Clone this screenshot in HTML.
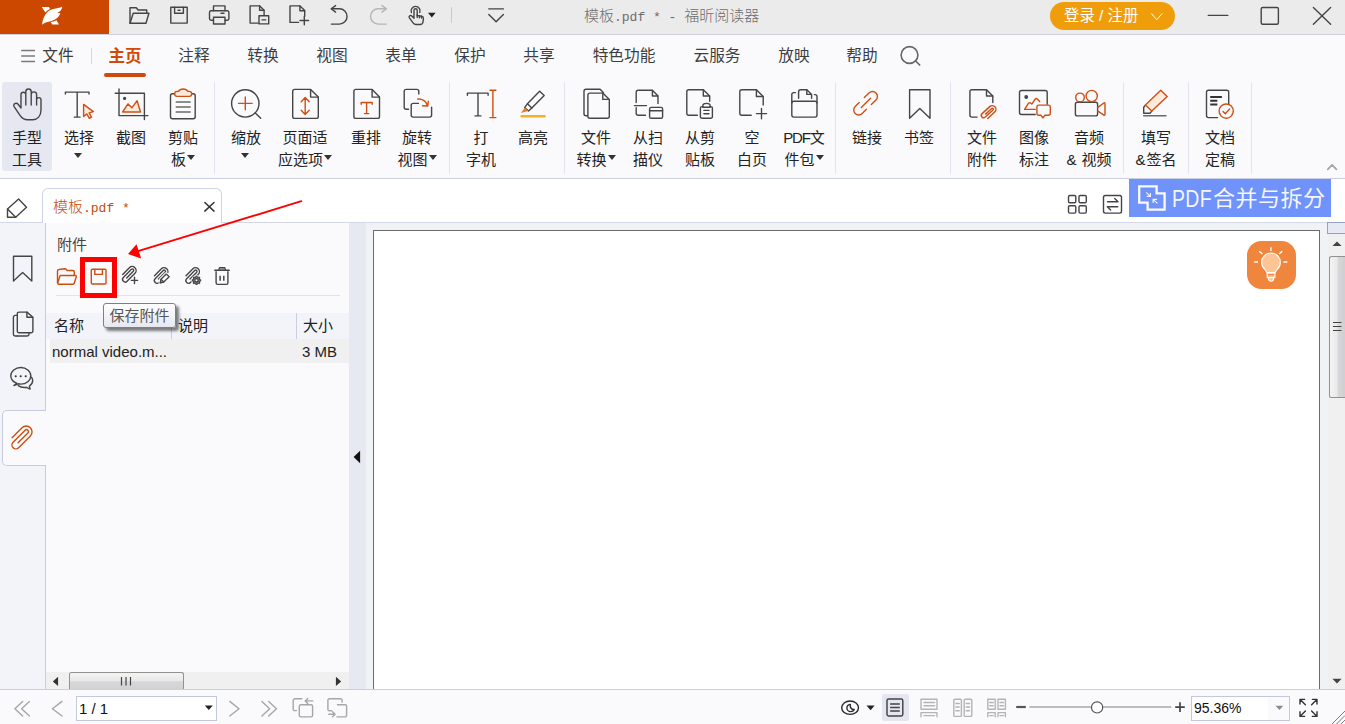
<!DOCTYPE html>
<html lang="zh-CN">
<head>
<meta charset="utf-8">
<title>模板.pdf * - 福昕阅读器</title>
<style>
*{box-sizing:border-box;margin:0;padding:0}
html,body{width:1345px;height:724px;overflow:hidden;background:#fafafc}
body{position:relative;font-family:"Liberation Sans","Noto Sans CJK SC",sans-serif;font-size:15px;color:#222;-webkit-font-smoothing:antialiased}
.a{position:absolute}
svg{position:absolute;overflow:visible}
.ic{fill:none;stroke:#444;stroke-width:1.4;stroke-linecap:round;stroke-linejoin:round}
.or{stroke:#cf4f12}
.gy{stroke:#b4b4b4}
/* title bar */
#tb{left:0;top:0;width:1345px;height:34px;background:#ebebeb}
#logo{left:0;top:0;width:109px;height:34px;background:#cc4700}
#tbline{left:0;top:34px;width:1345px;height:1px;background:#cdd0da}
#title{left:584px;top:6.700px;height:22px;line-height:22px;font-size:15px;font-weight:300;color:#6c6c6c;white-space:nowrap;font-family:"Liberation Mono","Noto Sans CJK SC",monospace}
#title .l{font-size:13px}
#login{left:1050px;top:2px;width:125px;height:28px;border-radius:14px;background:#f09d0c;color:#fff;font-size:15px;line-height:28px;padding-left:14px;font-size:15.400px;white-space:nowrap}
/* menu bar */
#mb{left:0;top:35px;width:1345px;height:42px;background:#fafafc}
.mi{position:absolute;top:45px;height:22px;line-height:22px;font-size:15.7px;color:#3e3e3e;white-space:nowrap;transform:translateX(-50%)}
/* ribbon */
#rib{left:0;top:77px;width:1345px;height:101px;background:#fafafc}
#ribline{left:0;top:178px;width:1345px;height:1px;background:#c9cfe3}
.sep{position:absolute;top:82px;width:1px;height:92px;background:#e3e5ee}
.rb{position:absolute;top:127px;width:90px;margin-left:-45px;text-align:center;font-size:15px;line-height:22px;color:#222;white-space:nowrap}
.rb i{display:inline-block;width:0;height:0;border-left:4px solid transparent;border-right:4px solid transparent;border-top:5px solid #333;vertical-align:middle;margin-left:1px;position:relative;top:-4px}
.rb i.s{top:-6px;left:-1.500px;margin-left:0}
/* tab row */
#tabrow{left:0;top:179px;width:1345px;height:43px;background:#fff}
#tabline{left:0;top:222px;width:1345px;height:1px;background:#d3d7e6}
#tab{left:42px;top:188px;width:180px;height:35px;background:#fff;border:1px solid #cfd4e6;border-bottom:none;border-radius:6px 6px 0 0}
#tabtxt{left:53px;top:198px;height:22px;line-height:22px;font-size:15px;font-weight:300;color:#c44a08;white-space:nowrap;font-family:"Liberation Mono","Noto Sans CJK SC",monospace}
#tabtxt .l{font-size:13px}
#banner{left:1129px;top:179px;width:202px;height:38px;background:#6f93fb;color:#fff;font-size:22px;line-height:38px;white-space:nowrap}
#banner span{position:absolute;left:42.500px;top:1px;letter-spacing:.500px;opacity:.93}
/* left strip */
#strip{left:0;top:223px;width:46px;height:466px;background:#f3f4f9;border-right:1px solid #c8cdde}
#stripact{left:2px;top:410px;width:44px;height:56px;background:#fafafc;border:1px solid #c8cdde;border-right:none;border-radius:5px 0 0 5px}
/* panel */
#panel{left:46px;top:223px;width:303px;height:466px;background:#fafafc}
#ptitle{left:57px;top:234px;line-height:22px;font-size:15px;color:#444}
#pline{left:56px;top:295px;width:284px;height:1px;background:#dfe3ee}
#thead{left:46px;top:313px;width:303px;height:26px;background:#f3f4f9}
.th{position:absolute;top:314px;line-height:24px;font-size:15px;color:#222}
.cs{position:absolute;top:313px;width:1px;height:26px;background:#c9cfe0}
#trow{left:50px;top:339px;width:299px;height:24px;background:#f0f0f0}
.td{position:absolute;top:340px;line-height:23px;font-size:15px;color:#222;white-space:nowrap}
#tip{left:103px;top:303px;width:73px;height:25px;background:linear-gradient(#fff,#e6e7f1);border:1px solid #7f7f7f;border-radius:3px;box-shadow:3px 3px 3px rgba(0,0,0,.5);font-size:15px;line-height:22px;padding-top:1px;color:#575757;text-align:center;white-space:nowrap}
#redbox{left:79.600px;top:256.500px;width:37.600px;height:41px;border:5.800px solid #ff0000}
/* hscroll */
#hs{left:46px;top:672px;width:303px;height:17px;background:#f0f0f0}
#hsth{left:68.500px;top:672px;width:115px;height:18px;background:linear-gradient(#f3f3f3 0%,#e9e9e9 45%,#d7d7d9 52%,#d2d2d4 100%);border:1px solid #929292;border-bottom:none;border-radius:2.500px 2.500px 0 0}
/* collapse strip */
#coll{left:349px;top:223px;width:17px;height:466px;background:#e6e8f2}
/* doc area */
#doc{left:366px;top:223px;width:962px;height:466px;background:#f1f2f6}
#page{left:373px;top:230px;width:947px;height:470px;background:#fff;border:1px solid #6c6c6c;border-bottom:none}
#bulb{left:1247px;top:241px;width:49px;height:48px;border-radius:14.500px;background:#f0863d}
/* vscroll */
#vs{left:1328px;top:223px;width:17px;height:466px;background:#f0f0f0}
#vstop{left:1327px;top:222px;width:19px;height:12px;background:#e6e9f3;border:1px solid #96a1bd}
#vsth{left:1328.500px;top:256px;width:18px;height:142px;background:linear-gradient(90deg,#f3f3f3 0%,#e9e9e9 42%,#d7d7d9 50%,#cdcdd0 100%);border:1px solid #929292;border-right:none;border-radius:2.500px 0 0 2.500px}
/* status bar */
#sbline{left:0;top:689px;width:1345px;height:1px;background:#c9cfe3}
#sb{left:0;top:690px;width:1345px;height:34px;background:#fafafc}
#pgin{left:76px;top:696px;width:141px;height:25px;background:#fff;border:1px solid #c3c8dc;font-size:15px;line-height:23px;padding-left:2px;color:#111}
#zmin{left:1191px;top:696px;width:99px;height:25px;background:#fff;border:1px solid #c3c8dc;font-size:14px;line-height:23px;padding-left:2px;color:#111}
#zmbtn{left:1268px;top:697px;width:21px;height:23px;background:#fafafc}
#viewact{left:882px;top:694px;width:27px;height:27px;background:#e4e6f0;border-radius:2px}
.tri{position:absolute;width:0;height:0;border-left:4px solid transparent;border-right:4px solid transparent;border-top:5px solid #222}
</style>
</head>
<body>
<!-- TITLE BAR -->
<div class="a" id="tb"></div>
<div class="a" id="logo"></div>
<div class="a" id="tbline"></div>
<div class="a" style="left:109px;top:0;width:1px;height:34px;background:#f3f6f8"></div>
<div class="a" id="title">模板<span class="l">.pdf * - </span>福昕阅读器</div>
<div class="a" id="login">登录 / 注册</div>

<svg class="a" style="left:0;top:0" width="1345" height="34" viewBox="0 0 1345 34">
 <!-- foxit logo -->
 <g fill="#fff">
  <path d="M41.800 7h7.200l1 2c-1.900.9-3.400 2.100-4.700 3.600z"/>
  <path d="M42 24.800c.2-2.600.8-5.100 1.900-7.500 .9-2.100 2.200-4 3.900-5.600 1.600-1.400 3.500-2.300 5.600-2.800 3.100-.6 6.100-.9 8.900-2.100-.3 1.400-.800 2.600-1.500 3.700-.9 .9-2.100 1.500-3.500 1.900 1 .5 2.100.8 3.100.8-.6 1.600-1.500 3-2.700 4.300-1.700 1.600-3.800 2.700-6.200 3.500-1.900.6-3.900 1-5.800 1.500-1.400.6-2.600 1.400-3.700 2.300z"/>
  <path d="M50.700 22.100c2-.4 4-1 5.800-1.900l2.500 4.200-6.700.2z"/>
 </g>
 <g class="ic" stroke-width="1.35">
  <!-- open folder -->
  <path d="M130 23.300V7.800h6.300l1.800 2.200h8.600v3.200"/><path d="M130 23.300l3.200-10.100h15.700l-2.900 10.100z"/>
  <!-- save -->
  <path d="M170.800 7.200h16.400v15.900h-16.400z"/><path d="M174.600 7.200v6h8.800v-6"/><path d="M178 10.300h2"/>
  <!-- print -->
  <path d="M213.500 10.800V5.900h11.500v4.900"/><path d="M213.500 20.300h-2.300a1.700 1.700 0 0 1-1.700-1.700v-6.100a1.700 1.700 0 0 1 1.700-1.700h16a1.700 1.700 0 0 1 1.700 1.700v6.100a1.700 1.700 0 0 1-1.700 1.700h-2.200"/><path d="M213.500 17.300h11.500v6.700h-11.500z"/><path d="M221 13.300h3"/>
  <!-- doc minus -->
  <path d="M258.500 23.100h-8.400V5.900h9.700l4.300 4.300v5.100"/><path d="M259.600 6v4.300h4.300"/><path d="M259 15.800h9.700v8.100H259z"/><path d="M262 19.900h3.700"/>
  <!-- doc plus -->
  <path d="M298.500 22.400h-8.500V5.900h10l4.700 4.700v5.600"/><path d="M299.900 6v4.700h4.700"/><path d="M304.300 16.300v8.500M300 20.500h8.600"/>
  <!-- undo -->
  <path d="M335.600 5.600l-4.400 3.200 4.400 3.300"/><path d="M331.600 8.800h7.800a7.600 7.600 0 0 1 0 15.300h-8"/>
  <!-- hand pointer -->
  <path d="M414 17.500v-7.200a1.600 1.600 0 0 1 3.200 0v5.100l4.400.9c1.200.3 1.900 1.200 1.800 2.400l-.4 3.300c-.2 1.500-1.400 2.500-2.900 2.500h-4.100c-1.100 0-2.100-.5-2.700-1.400l-3.900-5.200c-.5-.8-.4-1.600.3-2.100.700-.5 1.500-.4 2.100.200l2.200 2.300"/>
  <path d="M411.400 12.500a4.500 4.500 0 1 1 8.400 0"/>
  <path d="M417.200 15v2.500M419.400 15.600v2.200M421.500 16.100v2"/>
  <!-- dropdown -->
  <path d="M488.800 8.900h14.600M488.800 14.400l7.300 7.400 7.300-7.400"/>
  <!-- window controls -->
  <path d="M1208.300 15.400h19.500"/>
  <rect x="1261.200" y="7.500" width="17.200" height="16.700" rx="1.500"/>
  <path d="M1313.400 7.400l17.200 16.900M1330.600 7.400l-17.200 16.900"/>
 </g>
 <!-- redo (disabled) -->
 <g class="ic gy" stroke-width="1.35"><path d="M382 5.600l4.400 3.200-4.400 3.300"/><path d="M386 8.800h-7.800a7.600 7.600 0 0 0 0 15.300h8"/></g>
 <path fill="#222" d="M428 12.800h7.600l-3.800 4.700z"/>
 <path stroke="#c9c9c9" stroke-width="1" d="M451.500 7.100v15.700"/>
 <!-- login chevron -->
 <path fill="none" stroke="#fff" stroke-width="1" stroke-linecap="round" stroke-linejoin="round" d="M1151.600 13.700l5.200 6 5.200-6"/>
</svg>


<!-- MENU BAR -->
<div class="a" id="mb"></div>
<div class="mi" style="left:58px">文件</div>
<div class="a" style="left:91px;top:48px;width:1px;height:16px;background:#d5d8e2"></div>
<div class="mi" style="left:125px;color:#d04a0a;font-weight:bold;font-size:16.5px">主页</div>
<div class="a" style="left:104px;top:73px;width:42px;height:4px;border-radius:2px;background:#d04a0a"></div>
<div class="mi" style="left:194px">注释</div>
<div class="mi" style="left:263px">转换</div>
<div class="mi" style="left:332px">视图</div>
<div class="mi" style="left:401px">表单</div>
<div class="mi" style="left:470px">保护</div>
<div class="mi" style="left:539px">共享</div>
<div class="mi" style="left:624px">特色功能</div>
<div class="mi" style="left:717px">云服务</div>
<div class="mi" style="left:794px">放映</div>
<div class="mi" style="left:862px">帮助</div>

<svg class="a" style="left:0;top:35px" width="1345" height="42" viewBox="0 35 1345 42">
 <path stroke="#7a7a7a" stroke-width="1.5" fill="none" d="M21.200 50.500h13.800M21.200 56.100h13.800M21.200 61.600h13.800"/>
 <circle cx="909.500" cy="55" r="8.400" fill="none" stroke="#666" stroke-width="1.600"/>
 <path stroke="#666" stroke-width="1.700" stroke-linecap="round" d="M915.600 61l4.100 4"/>
</svg>


<!-- RIBBON -->
<div class="a" id="rib"></div>
<div class="a" id="ribline"></div>
<div class="a" style="left:2px;top:82px;width:50px;height:89px;background:#e6e8f1;border-radius:3px"></div>
<div class="sep" style="left:214px"></div>
<div class="sep" style="left:449px"></div>
<div class="sep" style="left:564px"></div>
<div class="sep" style="left:835px"></div>
<div class="sep" style="left:950px"></div>
<div class="sep" style="left:1123px"></div>
<div class="sep" style="left:1188px"></div>
<div class="sep" style="left:1251px"></div>
<div class="rb" style="left:27px">手型<br>工具</div>
<div class="rb" style="left:79px">选择<br><i class="s"></i></div>
<div class="rb" style="left:131px">截图</div>
<div class="rb" style="left:183px">剪贴<br>板<i></i></div>
<div class="rb" style="left:246px">缩放<br><i class="s"></i></div>
<div class="rb" style="left:305px">页面适<br>应选项<i></i></div>
<div class="rb" style="left:366px">重排</div>
<div class="rb" style="left:417px">旋转<br>视图<i></i></div>
<div class="rb" style="left:481px">打<br>字机</div>
<div class="rb" style="left:533px">高亮</div>
<div class="rb" style="left:596px">文件<br>转换<i></i></div>
<div class="rb" style="left:648px">从扫<br>描仪</div>
<div class="rb" style="left:700px">从剪<br>贴板</div>
<div class="rb" style="left:752px">空<br>白页</div>
<div class="rb" style="left:804px"><span style="letter-spacing:-1.200px">PDF</span>文<br>件包<i></i></div>
<div class="rb" style="left:867px">链接</div>
<div class="rb" style="left:919px">书签</div>
<div class="rb" style="left:982px">文件<br>附件</div>
<div class="rb" style="left:1034px">图像<br>标注</div>
<div class="rb" style="left:1089px">音频<br><span style="letter-spacing:1px">&amp;</span> 视频</div>
<div class="rb" style="left:1156px">填写<br><span style="letter-spacing:1px">&amp;</span>签名</div>
<div class="rb" style="left:1220px">文档<br>定稿</div>

<svg class="a" style="left:0;top:78px" width="1345" height="100" viewBox="0 78 1345 100">
<g class="ic" style="stroke:#454545" stroke-width="1.4">
 <!-- 1 hand -->
 <path d="M21 108V94.600a2.400 2.400 0 0 1 4.800 0V105M25.800 105V91.700a2.700 2.700 0 0 1 5.400 0V105M31.200 105V94.600a2.700 2.700 0 0 1 5.400 0V105M36.600 105v-5.200a2.200 2.200 0 0 1 4.400 0V110c0 6-3.500 9.800-8.300 9.800h-5.200c-3.400 0-5.700-1.700-7.500-4.400l-5.700-8.500c-.8-1.200-.6-2.500.5-3.200 1.100-.7 2.400-.4 3.300.6L21 108"/>
 <!-- 2 select: T -->
 <path d="M65.400 94v-1.900h23.600V94M77.200 92.100v25M74.200 117.100h5.900"/>
 <!-- 3 snapshot -->
 <path d="M119 89v26.600h29M115.200 93.200h29.200v26.300"/>
 <circle cx="124.600" cy="98.400" r=".9" fill="#454545"/>
 <!-- 4 clipboard -->
 <path d="M175 93.700h-2.500a2 2 0 0 0-2 2v21a2 2 0 0 0 2 2h20.700a2 2 0 0 0 2-2v-21a2 2 0 0 0-2-2H191"/>
 <path stroke="#6a6a6a" d="M176.200 102h14M176.200 107h14M176.200 112h14"/>
 <!-- 5 zoom -->
 <circle cx="245.300" cy="103.400" r="13.700"/><path d="M255.300 113l5.400 5.300"/>
 <!-- 6 fit page -->
 <path d="M310.600 89.400h-15.900a2 2 0 0 0-2 2v25a2 2 0 0 0 2 2h21.600a2 2 0 0 0 2-2V97.100z"/><path d="M310.600 89.600v7.500h7.600"/>
 <!-- 7 reflow -->
 <path d="M372.100 89.400h-16.200a2 2 0 0 0-2 2v25a2 2 0 0 0 2 2h21.600a2 2 0 0 0 2-2V97.100z"/><path d="M372.100 89.600v7.500h7.300"/>
 <!-- 8 rotate view -->
 <path d="M408.500 109.300h-2.300a2 2 0 0 1-2-2V91.400a2 2 0 0 1 2-2h10.600a2 2 0 0 1 2 2v2.600"/>
 <path d="M418.400 103.400h-5.200a2 2 0 0 0-2 2v9.700a2 2 0 0 0 2 2h16.400a2 2 0 0 0 2-2v-7.800"/>
 <!-- 9 typewriter T -->
 <path d="M467.400 95.200v-2.100h20.700v2.100M478 93.100v22.800M475 115.900h5.900"/>
 <!-- 10 highlighter -->
 <path d="M539.600 91.300l4.600 4.300-12.400 12.500-4.400-4.300z"/><path d="M527.400 103.800l-2.800 3.800 3.900 3.500 3.300-3"/>
 <!-- 11 file convert -->
 <path d="M587.400 115.800h-1.400a2 2 0 0 1-2-2V91.300a2 2 0 0 1 2-2h14.100l3.200 3.300"/>
 <path d="M602.800 93.100h-12.900a2 2 0 0 0-2 2v21.200a2 2 0 0 0 2 2h17.400a2 2 0 0 0 2-2V99.400z"/><path d="M602.800 93.300v6.100h6.300"/>
</g>
<g class="ic or" stroke-width="1.4">
 <!-- 2 cursor -->
 <path fill="#fdeadb" d="M83.600 104.400v12.100l3.200-2.600 2.500 4.500 2.200-1.300-2.400-4.300 4.300-1.200z"/>
 <!-- 3 mountain -->
 <path fill="#fdeadb" d="M122.600 112l5.400-8.100 3.900 3.900 5.200-7.100 3.400 11.300z"/>
 <!-- 4 clip -->
 <path fill="#fdeadb" d="M177 96.400a2.300 2.300 0 0 1-2.300-2.300v-.400a2.300 2.300 0 0 1 2.300-2.300h1.500c.800-1.500 2.500-2.400 4.700-2.400s3.900.9 4.700 2.400h1.500a2.300 2.300 0 0 1 2.300 2.300v.400a2.300 2.300 0 0 1-2.300 2.300z"/>
 <!-- 5 plus -->
 <path d="M238.500 103.400h13.600M245.300 97v12.800"/>
 <!-- 6 arrows -->
 <path d="M305.200 97.600v16.800M301.200 101.700l4-4.200 4 4.200M301.200 110.300l4 4.200 4-4.200"/>
 <!-- 7 T -->
 <path d="M361.200 104.300v-1.800h11v1.800M366.600 102.500v11.100M364.500 113.600h4.300"/>
 <!-- 8 arrow -->
 <path d="M417.600 99.100c4.800-.3 8.200 1.900 9.800 6.300M422.600 105.700l5.200.3.500-4.900"/>
 <!-- 9 cursor -->
 <path d="M489.900 90.200h6M489.900 117.600h6M492.900 90.200v27.400"/>
</g>
<path fill="#e8821e" d="M524.800 107.800l3.500 3.200-7.400 2z"/>
<path stroke="#f5b120" stroke-width="2.600" stroke-linecap="round" d="M521.700 116.200h22.800"/>

<g class="ic" style="stroke:#454545" stroke-width="1.4">
 <!-- 12 from scanner -->
 <path d="M636.200 102.600V92.200a2 2 0 0 1 2-2h14.200l5.600 5.800v7.400"/><path d="M652.400 90.400v5.600h5.400"/>
 <path d="M634.400 105.600h12"/>
 <path d="M636.200 107.800v5.500a2 2 0 0 0 2 2h7.300"/>
 <rect x="649.600" y="107.400" width="13" height="10.900" rx="1.600"/><path d="M649.600 110.800h13"/>
 <!-- 13 from clipboard -->
 <path d="M697.400 115.300h-8.600a2 2 0 0 1-2-2V91.700a2 2 0 0 1 2-2h14.500l6.400 6.300v5.200"/><path d="M703.300 89.900v6.100h6.200"/>
 <path d="M702.800 106.600h-.8a1.600 1.600 0 0 0-1.600 1.600v8.500a1.600 1.600 0 0 0 1.600 1.600h8.800a1.600 1.600 0 0 0 1.600-1.600v-8.500a1.600 1.600 0 0 0-1.600-1.600h-.8"/>
 <path d="M702.800 107.200v-1.300c0-1.500 1.600-2.500 3.700-2.500s3.700 1 3.700 2.500v1.300z"/>
 <path d="M703.900 110.400h5.100M703.900 113.700h5.100"/>
 <!-- 14 blank page -->
 <path d="M751.200 115.300h-9.400a2 2 0 0 1-2-2V91.700a2 2 0 0 1 2-2h14.600l6.800 6.800v8.600"/><path d="M756.400 89.900v6.600h6.600"/>
 <path d="M761.500 108.500v10.300M756.400 113.600h10.200"/>
 <!-- 15 portfolio -->
 <path d="M793.800 101.200h21.200a2 2 0 0 1 2 2v11.900a2 2 0 0 1-2 2h-21.200a2 2 0 0 1-2-2v-11.900a2 2 0 0 1 2-2z"/>
 <path d="M791.800 103V94.600a2 2 0 0 1 2-2h1.700M817 103v-6.400a2 2 0 0 0-2-2h-.6"/>
 <path d="M798.600 98.200v-6.500a2 2 0 0 1 2-2h6.200l4.800 4.700v3.800"/><path d="M806.800 89.900v4.500h4.600"/>
 <!-- 17 bookmark -->
 <path d="M909.600 89.700h20.400v28.500l-10.200-9.700-10.200 9.700z"/>
 <!-- 18 file attachment -->
 <path d="M977.100 117.100h-5.200a2 2 0 0 1-2-2V91.700a2 2 0 0 1 2-2h14.600l6.300 6.300v6.500"/><path d="M986.500 89.900v6.100h6.200"/>
 <!-- 19 image annotation -->
 <path d="M1035.200 114.500h-13.700a2 2 0 0 1-2-2V92.500a2 2 0 0 1 2-2h23.700a2 2 0 0 1 2 2v11.700"/>
 <circle cx="1026.200" cy="97" r="1.200" fill="#454545"/>
 <!-- 20 camera body -->
 <rect x="1075.400" y="102.200" width="22.200" height="13.700" rx="2"/>
 <!-- 21 fill sign tip -->
 <path d="M1145.400 105.100l-1.700 2.200v6h6.300l1.800-2.200"/>
 <path stroke="#6a6a6a" stroke-width="1.500" d="M1143.700 115.800h22.300"/>
 <!-- 22 finalize -->
 <path d="M1217.600 117.600h-9.100a2 2 0 0 1-2-2V92.200a2 2 0 0 1 2-2h18.200a2 2 0 0 1 2 2v12"/>
 <path stroke="#333" stroke-width="2" stroke-linecap="butt" d="M1210.200 97h11.700M1210.200 100.800h7.100M1210.200 104.600h7.100"/>
</g>
<g class="ic or" stroke-width="1.400">
 <!-- 16 link -->
 <g transform="translate(872.460 96.500) rotate(-44.500)" stroke-width="1.400">
  <path d="M-6.500 -4.970H0a4.970 4.970 0 0 1 0 9.940H-6.450"/>
  <path d="M-15.650 0H-2.530"/>
  <path d="M-13.630 -4.970H-19.270a4.970 4.970 0 0 0 0 9.940H-13.300"/>
 </g>
 <!-- 18 paperclip -->
 <g transform="translate(988.900 112.400) rotate(-42.500) scale(1 -1)" stroke-width="1.450">
  <path d="M-5 -3.700H4.500a3.700 3.700 0 0 1 0 7.400H-5.850a2.350 2.350 0 0 1 0-4.700H4.700a1 1 0 0 1 0 2H-3.600"/>
 </g>
 <!-- 19 mountain + bubble -->
 <path d="M1035.200 109.400h-10.600l3.800-6c.8-.9 1.600-.9 2.400-.2l1 .9 3.200-4.800c.8-1 1.700-1 2.500-.1l2.200 2.300"/>
 <path d="M1038.900 105.100h9.400a2 2 0 0 1 2 2v6.200a2 2 0 0 1-2 2h-3.400l-2 2.600-2-2.600h-2a2 2 0 0 1-2-2v-6.200a2 2 0 0 1 2-2z"/>
 <!-- 20 reels + lens -->
 <circle cx="1080" cy="97.400" r="4.300"/><circle cx="1091.700" cy="96" r="5.600"/>
 <path d="M1097.600 107.600l6.200-4.600c.6-.4 1.200-.1 1.200.6v10.900c0 .7-.6 1-1.200.6l-6.200-4.200"/>
 <!-- 21 pen body -->
 <path fill="#fdeadb" d="M1160.800 90.200l6.400 6.300-15.400 14.600-6.400-6z"/>
 <!-- 22 check -->
 <circle cx="1226.200" cy="111.100" r="7.100" fill="#fafafc"/><path d="M1223 111.400l2.300 2.300 4.300-4.700"/>
</g>
<path fill="none" stroke="#a6a6a6" stroke-width="1.800" stroke-linecap="round" stroke-linejoin="round" d="M1327.800 169.300l4.300-4.500 4.300 4.500"/>

</svg>


<!-- TAB ROW -->
<div class="a" id="tabrow"></div>
<div class="a" id="tabline"></div>
<div class="a" id="tab"></div>
<div class="a" id="tabtxt">模板<span class="l">.pdf *</span></div>
<div class="a" id="banner"><span><b style="font-weight:normal;display:inline-block;width:41.500px;font-size:23.400px;transform:scaleX(.83);transform-origin:0 50%;vertical-align:top">PDF</b>合并与拆分</span></div>

<svg class="a" style="left:0;top:179px" width="1345" height="44" viewBox="0 179 1345 44">
 <g class="ic" style="stroke:#454545" stroke-width="1.400">
  <!-- diamond/eraser -->
  <path d="M18.600 199.100l7.900 8.200-10.800 10h-8.200v-8.300z"/><path d="M7.500 209l8.200 8.300"/>
  <!-- tab close -->
  <path stroke="#333" stroke-width="1.500" d="M204.800 202.500l9.200 8.600M214 202.500l-9.200 8.600"/>
  <!-- grid -->
  <rect x="1068.500" y="195.500" width="7.300" height="7.300" rx="1.300"/><rect x="1079" y="195.500" width="7.300" height="7.300" rx="1.300"/>
  <rect x="1068.500" y="205.800" width="7.300" height="7.300" rx="1.300"/><rect x="1079" y="205.800" width="7.300" height="7.300" rx="1.300"/>
  <!-- swap -->
  <rect x="1103.500" y="195.500" width="18" height="17.600" rx="1.800"/>
  <path d="M1107.500 201.800h10.500l-3.300-3.300M1117.800 206.800h-10.500l3.300 3.300"/>
 </g>
 <!-- banner icon -->
 <path fill="none" stroke="#fff" stroke-width="2.300" stroke-linejoin="miter" opacity=".96" d="M1139.200 186.400h17.400v6.900h8v16.300h-17v-7h-8.400z"/>
 <g fill="none" stroke="#fff" stroke-width="1.150" opacity=".92">
  <path d="M1146.100 192.400l4.300 4M1150.400 193v3.400h-3.700"/>
  <path d="M1157.500 203.400l-4.400-4M1153.100 203.100v-3.700h4"/>
 </g>
</svg>


<!-- LEFT STRIP + PANEL -->
<div class="a" id="strip"></div>
<div class="a" id="panel"></div>
<div class="a" id="stripact"></div>
<div class="a" id="ptitle">附件</div>
<div class="a" id="pline"></div>
<div class="a" id="thead"></div>
<div class="cs" style="left:171px"></div>
<div class="cs" style="left:296px"></div>
<div class="th" style="left:54px">名称</div>
<div class="th" style="left:178px">说明</div>
<div class="th" style="left:303px">大小</div>
<div class="a" id="trow"></div>
<div class="td" style="left:52px">normal video.m...</div>
<div class="td" style="left:302px">3 MB</div>
<div class="a" id="hs"></div>
<div class="a" id="hsth"></div>
<div class="a" id="coll"></div>

<svg class="a" style="left:0;top:223px" width="370" height="466" viewBox="0 223 370 466">
 <g class="ic" style="stroke:#454545" stroke-width="1.400">
  <!-- sidebar bookmark -->
  <path d="M13.500 256.200h18.300v24.800l-9.200-8.400-9.100 8.400z"/>
  <!-- sidebar pages -->
  <path d="M17.300 336h-2.200a1.700 1.700 0 0 1-1.700-1.700v-17.200a1.700 1.700 0 0 1 1.700-1.700h2"/><path d="M29 333v1.300a1.700 1.700 0 0 1-1.700 1.700H17.300"/>
  <path d="M26.900 312.100h-7.900a1.700 1.700 0 0 0-1.700 1.700v17.200a1.700 1.700 0 0 0 1.700 1.700h12.200a1.700 1.700 0 0 0 1.700-1.700V317.200z"/><path d="M26.900 312.300v4.900h5.800"/>
  <!-- sidebar comments -->
  <path d="M16.700 383.200c-3.500-1.300-5.900-4.100-5.900-7.400 0-4.600 4.500-8.300 10-8.300s10 3.700 10 8.300-4.500 8.300-10 8.300c-.9 0-1.700-.1-2.500-.3l-4.400 1.700z"/>
  <path d="M31.600 377.300c.7 1 1.100 2.100 1.100 3.300 0 2.200-1.300 4.200-3.300 5.500l.7 3-3.800-1.800c-.7.100-1.400.2-2.100.2-2.300 0-4.400-.7-6-1.800"/>
  <path style="stroke:#333" stroke-width="2.100" stroke-linecap="round" d="M15.700 376.200h.010M20.700 376.200h.010M25.700 376.200h.010"/>
  <!-- panel clips -->
  <g transform="translate(128.700 274) rotate(-45.500)" stroke-width="1.400"><path d="M-4.54 -3.93H4.97a3.93 3.93 0 0 1 0 7.86H-6.28a2.62 2.62 0 0 1 0 -5.24H5.23a1.31 1.31 0 0 1 0 2.62H-4.18"/></g>
  <path stroke-width="1.400" d="M134.500 277.300v6.200M131.400 280.400h6.200"/>
  <g transform="translate(160.500 275.200) rotate(-45.500)" stroke-width="1.400"><path d="M-4.54 -3.93H4.97a3.93 3.93 0 0 1 0 7.86H-6.28a2.62 2.62 0 0 1 0 -5.24H5.23a1.31 1.31 0 0 1 0 2.62H-4.18"/></g>
  <path style="stroke:#fafafc" stroke-width="3.600" fill="#fafafc" d="M166.200 274.100l3 2.700-5.500 5.200-3.500.8.800-3.500z"/>
  <path fill="#fafafc" stroke-width="1.350" d="M166.200 274.100l3 2.700-5.500 5.200-3.500.8.800-3.500z"/><path stroke-width="1.300" d="M161 279.300l2.700 2.700"/>
  <path fill="#444" stroke-width=".6" d="M160.200 282.800l.400-1.600 1.200 1.200z"/>
  <g transform="translate(192 275.200) rotate(-45.500)" stroke-width="1.400"><path d="M-4.54 -3.93H4.97a3.93 3.93 0 0 1 0 7.86H-6.28a2.62 2.62 0 0 1 0 -5.24H5.23a1.31 1.31 0 0 1 0 2.62H-4.18"/></g>
  <!-- gear -->
  <circle cx="196.500" cy="280.300" r="5.300" fill="#fafafc" stroke="none"/>
  <path fill="#9a9a9a" stroke-width="1.100" d="M199.62 279.58L200.66 279.72L200.66 280.88L199.62 281.02L199.21 282.00L199.85 282.83L199.03 283.65L198.20 283.01L197.22 283.42L197.08 284.46L195.92 284.46L195.78 283.42L194.80 283.01L193.97 283.65L193.15 282.83L193.79 282.00L193.38 281.02L192.34 280.88L192.34 279.72L193.38 279.58L193.79 278.60L193.15 277.77L193.97 276.95L194.80 277.59L195.78 277.18L195.92 276.14L197.08 276.14L197.22 277.18L198.20 277.59L199.03 276.95L199.85 277.77L199.21 278.60z"/>
  <circle cx="196.500" cy="280.300" r="1.700" fill="#fff" style="stroke:#3a3a3a" stroke-width="1.300"/>
  <!-- trash -->
  <path d="M214.800 270.200h14.500"/><path fill="#8a8a8a" stroke-width="1.100" d="M218.600 270.200l.9-2.700h5.300l.9 2.700z"/>
  <path d="M216.100 271.800v11a1.600 1.600 0 0 0 1.600 1.600h8.600a1.600 1.600 0 0 0 1.600-1.600v-11"/>
  <path stroke-width="1.500" stroke-linecap="butt" d="M220.100 275.800v5M223.800 275.800v5"/>
 </g>
 <g class="ic" style="stroke:#cc4e10" stroke-width="1.350">
  <!-- sidebar paperclip -->
  <g transform="translate(21.030 437.030) rotate(-45)" stroke-width="1.400"><path d="M-6.73 -5.88H7.32a5.88 5.88 0 0 1 0 11.76H-9.28a3.92 3.92 0 0 1 0 -7.84H7.74a1.96 1.96 0 0 1 0 3.92H-6.2"/></g>
  <!-- panel folder -->
  <path d="M57.500 283v-11.900a1.600 1.600 0 0 1 1.600-1.600l5.700-.8c.6 0 1 .2 1.400.6l1 1.200h5.500a1.600 1.600 0 0 1 1.600 1.600v3"/>
  <path d="M60.700 275.500h14.600c.8 0 1.200.6 1 1.300l-2.100 6.500c-.2.600-.6.900-1.200.9H58.800c-.8 0-1.200-.6-1-1.300l2-6.600c.2-.5.500-.8.900-.8z"/>
  <!-- panel save -->
  <rect x="91.300" y="269.200" width="14.700" height="14.800" rx="1"/><path d="M94.800 269.400v5h7.600v-5"/>
 </g>
 <!-- collapse arrow -->
 <path fill="#111" d="M353.600 457l6.500-6.200v12.400z"/>
 <!-- hscroll arrows + grip -->
 <path fill="#333" d="M52.800 681.400l5.300-4.600v9.200zM341.200 681.400l-5.300-4.600v9.200z"/>
 <path stroke="#444" stroke-width="1.200" d="M121.500 677v8.400M126 677v8.400M130.500 677v8.400"/>
</svg>


<!-- DOC AREA -->
<div class="a" id="doc"></div>
<div class="a" id="page"></div>
<div class="a" id="bulb"></div>
<div class="a" id="vs"></div>
<div class="a" id="vstop"></div>
<div class="a" id="vsth"></div>

<svg class="a" style="left:1240px;top:223px" width="105" height="466" viewBox="1240 223 105 466">
 <!-- bulb -->
 <g fill="none" stroke="#fff" stroke-width="1.100" stroke-linecap="round" stroke-linejoin="round">
  <path fill="#fdc595" d="M1265 269.500A9.350 9.350 0 1 1 1277 269.500L1274.900 272.900H1267.200z"/>
  <path fill="#fdc595" d="M1267.200 272.900h7.700v4.800h-7.700z"/>
  <path fill="#fdc595" d="M1268.600 277.700h4.900v1.100a2.450 2.450 0 0 1-4.900 0z"/>
  <path stroke="#f0863d" stroke-width="1.300" stroke-linecap="butt" d="M1267.900 274.600h6.300"/>
  <path stroke-width="1.400" stroke-linecap="butt" d="M1270.900 247.300v3.600M1259.200 251.200l3.200 2.700M1282.300 251.200l-3.100 2.700M1254.200 262h3.800M1283.400 262h3.900"/>
 </g>
 <!-- vscroll -->
 <path fill="#444" d="M1337 241.400l4.600 4.600h-9.200zM1337 683.400l4.600-4.600h-9.200z"/>
 <path stroke="#444" stroke-width="1.200" d="M1333 322.500h8.500M1333 326.500h8.500M1333 330.500h8.500"/>
</svg>


<!-- STATUS BAR -->
<div class="a" id="sb"></div>
<div class="a" id="sbline"></div>
<div class="a" id="pgin">1 / 1</div>
<div class="a" id="viewact"></div>
<div class="a" id="zmin">95.36%</div>
<div class="a" id="zmbtn"></div>

<svg class="a" style="left:0;top:690px" width="1345" height="34" viewBox="0 690 1345 34">
 <g class="ic" style="stroke:#a6a6a6" stroke-width="1.150">
  <path d="M22.700 701.400l-7.800 7.300 7.800 7.300M29.400 701.400l-7.800 7.300 7.800 7.300"/>
  <path d="M62 701.400l-9.600 7.300 9.600 7.300"/>
  <path d="M229.800 701.400l9.200 7.300-9.200 7.300"/>
  <path d="M261.900 701.400l7.800 7.300-7.800 7.300M268.700 701.400l7.800 7.300-7.800 7.300"/>
  <!-- extract icons -->
  <path d="M296.500 710.600h-1.700a1.600 1.600 0 0 1-1.600-1.600v-8.600a1.600 1.600 0 0 1 1.600-1.600h7"/>
  <rect x="299.300" y="704.700" width="13.300" height="12.200" rx="1.600"/>
  <path d="M312.800 700.900h-7.400M307.800 698.400l-2.600 2.500 2.600 2.500"/>
  <path d="M331.500 710.800h-2a1.600 1.600 0 0 1-1.600-1.600v-8.800a1.600 1.600 0 0 1 1.600-1.600h11a1.600 1.600 0 0 1 1.600 1.600v1.600"/>
  <path d="M337.500 704.700h7.500a1.600 1.600 0 0 1 1.600 1.600v9a1.600 1.600 0 0 1-1.600 1.600h-8"/>
  <path d="M328.700 714.200h6.200M332.500 711.700l2.600 2.500-2.600 2.500"/>
 </g>
 <!-- page dropdown arrow -->
 <path fill="#222" d="M204.800 705.500h8l-4 4.600z"/>
 <!-- moon -->
 <g class="ic" style="stroke:#2a2a2a" stroke-width="1.700">
  <ellipse cx="850.100" cy="707.700" rx="8.400" ry="6.700"/>
  <path stroke-width="1.400" d="M850.300 704.400c-2 .3-3.400 1.800-3.400 3.600 0 2 1.700 3.600 3.800 3.600 1.600 0 2.900-.8 3.500-2.100-2.500.3-4.500-2-3.900-5.100z"/>
 </g>
 <path fill="#222" d="M866.500 705.400h8.100l-4 4.800z"/>
 <!-- single page (active) -->
 <g class="ic" style="stroke:#444">
  <rect x="887" y="698.900" width="15.800" height="17" rx="1.600" stroke-width="1.450"/>
  <path stroke-width="1.500" stroke-linecap="butt" d="M890.100 703.900h9.700M890.100 707.400h9.700M890.100 710.900h9.700"/>
 </g>
 <g class="ic" style="stroke:#b4b4b4" stroke-width="1.200" stroke-linecap="butt">
  <!-- continuous -->
  <path d="M921 709.300v-10.100h16v10.100M924 702.500h10.600M924 705.800h10.600M921 709.300h16"/>
  <path d="M921 716.800v-4.200h16v4.200M924 715.600h10.600"/>
  <!-- facing -->
  <rect x="953.800" y="699.200" width="7.600" height="17.200" rx="1"/><rect x="964.200" y="699.200" width="7.600" height="17.200" rx="1"/>
  <path d="M955.800 703.500h3.400M955.800 707h3.400M955.800 710.800h3.400M966.200 703.500h3.400M966.200 707h3.400M966.200 710.800h3.400"/>
  <!-- continuous facing -->
  <path d="M987.800 709.300v-10.100h7.400v10.100zM998 709.300v-10.100h7.400v10.100z"/>
  <path d="M989.800 702.500h3.400M989.800 705.800h3.400M1000 702.500h3.400M1000 705.800h3.400"/>
  <path d="M987.800 716.800v-4.200h7.400v4.200M998 716.800v-4.200h7.400v4.200M989.800 715.600h3.400M1000 715.600h3.400"/>
 </g>
 <!-- zoom slider -->
 <path stroke="#555" stroke-width="2.200" d="M1016.200 707h9.600"/>
 <path stroke="#a8a8a8" stroke-width="1.300" d="M1029.300 707h142"/>
 <circle cx="1097.100" cy="707.400" r="5.600" fill="#fff" stroke="#555" stroke-width="1.200"/>
 <path stroke="#444" stroke-width="1.700" d="M1175.200 707.100h9.600M1180 702.200v9.800"/>
 <path fill="#8a8a8a" d="M1275.600 705.700h7.600l-3.800 4.200z"/>
 <!-- fullscreen -->
 <g class="ic" style="stroke:#333" stroke-width="1.500">
  <path d="M1305.400 704.800l-5.200-5.200M1300 704v-4.600h4.600"/>
  <path d="M1311.600 704.800l5.200-5.200M1312.400 699.400h4.600v4.600"/>
  <path d="M1305.400 711l-5.200 5.200M1300 711.800v4.600h4.600"/>
  <path d="M1311.600 711l5.200 5.200M1312.400 716.400h4.600v-4.600"/>
 </g>
 <!-- resize grip -->
 <path stroke="#7d7d7d" stroke-width="1" d="M1345 711l-13 13M1345 715.500l-8.500 8.500M1345 720l-4 4"/>
</svg>


<!-- OVERLAYS -->
<div class="a" id="redbox"></div>
<div class="a" id="tip">保存附件</div>

<svg class="a" style="left:100px;top:190px" width="220" height="80" viewBox="100 190 220 80">
 <path stroke="#ff0000" stroke-width="1.900" stroke-linecap="round" d="M301.300 201.200L138 251.100"/>
 <path fill="#ff0000" d="M128 254l8.500-9.700 4.700 14.100z"/>
</svg>

</body>
</html>
